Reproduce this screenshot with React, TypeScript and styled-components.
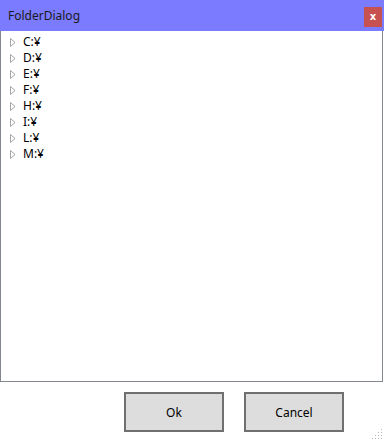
import styled, { createGlobalStyle } from "styled-components";

const drives = ["C:¥", "D:¥", "E:¥", "F:¥", "H:¥", "I:¥", "L:¥", "M:¥"];

export default function App() {
  return (
    <>
      <Global />
      <Window>
        <TitleBar>
          <Title>FolderDialog</Title>
          <CloseButton>x</CloseButton>
        </TitleBar>
        <Tree>
          {drives.map((d) => (
            <TreeRow key={d}>
              <Expander viewBox="0 0 6 9">
                <path d="M0.5 0.5 L5 4.5 L0.5 8.5 Z" fill="none" stroke="#a6a6a6" strokeWidth="1" />
              </Expander>
              <Label>{d}</Label>
            </TreeRow>
          ))}
        </Tree>
        <Footer>
          <Button>Ok</Button>
          <Button>Cancel</Button>
        </Footer>
        <Grip viewBox="0 0 12 12">
          {[
            [10, 2],
            [10, 5],
            [7, 5],
            [10, 8],
            [7, 8],
            [4, 8],
            [10, 11],
            [7, 11],
            [4, 11],
            [1, 11],
          ].map(([x, y]) => (
            <rect key={`${x}-${y}`} x={x} y={y - 1} width="1" height="1" fill="#b8b8b8" />
          ))}
        </Grip>
      </Window>
    </>
  );
}

const Global = createGlobalStyle`
  body {
    margin: 0;
    background: #ffffff;
    font-family: "Noto Sans", "Open Sans", sans-serif;
  }
`;

const Window = styled.div`
  position: relative;
  width: 384px;
  height: 442px;
  display: flex;
  flex-direction: column;
  background: #ffffff;
`;

const TitleBar = styled.div`
  height: 31px;
  background: #7b7bff;
  display: flex;
  align-items: center;
  justify-content: space-between;
  padding: 0 2px 0 8px;
  box-sizing: border-box;
`;

const Title = styled.span`
  font-size: 12px;
  color: #1a1a1a;
  font-family: "Noto Sans", sans-serif;
`;

const CloseButton = styled.div`
  width: 18px;
  height: 20px;
  margin-top: 2px;
  background: #c75050;
  color: #ffffff;
  font-family: "DejaVu Sans", sans-serif;
  font-weight: bold;
  font-size: 10px;
  display: flex;
  align-items: center;
  justify-content: center;
`;

const Tree = styled.div`
  height: 351px;
  margin-right: 1px;
  border: 1px solid #828790;
  border-top: none;
  box-sizing: border-box;
  padding: 3px 0 0 9px;
`;

const TreeRow = styled.div`
  height: 16px;
  display: flex;
  align-items: center;
`;

const Expander = styled.svg`
  width: 6px;
  height: 9px;
  margin-right: 7px;
`;

const Label = styled.span`
  font-size: 12px;
  color: #000000;
  line-height: 16px;
`;

const Footer = styled.div`
  display: flex;
  justify-content: flex-end;
  gap: 20px;
  padding: 10px 40px 0 0;
`;

const Button = styled.button`
  width: 100px;
  height: 40px;
  background: #dddddd;
  border: 2px solid #707070;
  font-family: "Noto Sans", sans-serif;
  font-size: 12px;
  color: #000000;
  padding: 0;
`;

const Grip = styled.svg`
  position: absolute;
  right: 1px;
  bottom: 2px;
  width: 12px;
  height: 12px;
`;
